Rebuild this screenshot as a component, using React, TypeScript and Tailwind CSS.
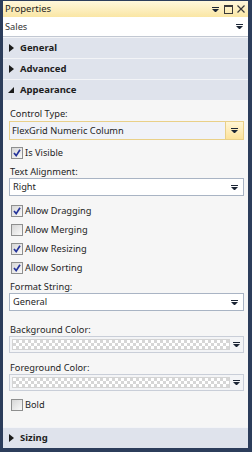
import React from "react";

const font = { fontFamily: '"Segoe UI", "Noto Sans", "Open Sans", sans-serif' };

function Arrow({ className = "" }: { className?: string }) {
  return (
    <svg width="7" height="5" viewBox="0 0 7 5" className={className}>
      <rect x="0" y="0" width="7" height="1" fill="#1b2535" />
      <polygon points="0,2 7,2 3.5,5.5" fill="#1b2535" />
    </svg>
  );
}

function Check({ checked }: { checked: boolean }) {
  return (
    <div className="w-[12px] h-[12px] shrink-0 border border-[#8e8f8f] bg-gradient-to-br from-[#d6d6d6] to-[#fafafa] flex items-center justify-center">
      {checked && (
        <svg width="8" height="8" viewBox="0 0 8 8">
          <path d="M1 4 L3.2 6.6 L7 0.8" stroke="#24339a" strokeWidth="1.7" fill="none" />
        </svg>
      )}
    </div>
  );
}

function Header({ label, open = false }: { label: string; open?: boolean }) {
  return (
    <div className="h-[21px] shrink-0 bg-[#dfe3ec] flex items-center pl-[5px] border-t border-[#f3f4f7]">
      <div className="w-[12px] flex items-center">
        {open ? (
          <svg width="6" height="6" viewBox="0 0 6 6">
            <polygon points="6,0 6,6 0,6" fill="#1b1b1b" />
          </svg>
        ) : (
          <svg width="5" height="8" viewBox="0 0 5 8" className="ml-[1px]">
            <polygon points="0,0 5,4 0,8" fill="#1b1b1b" />
          </svg>
        )}
      </div>
      <span className="text-[9.5px] leading-[12px] font-bold text-[#1e1e1e]">{label}</span>
    </div>
  );
}

function Label({ text, className = "" }: { text: string; className?: string }) {
  return (
    <div className={"h-[13px] shrink-0 pl-[1px] text-[9.25px] leading-[13px] text-[#1e1e1e] " + className}>{text}</div>
  );
}

function Combo({ text }: { text: string }) {
  return (
    <div className="h-[18px] shrink-0 bg-white border border-[#a9b4c4] flex items-center pl-[3px] pr-[5px]">
      <span className="flex-1 text-[9.25px] leading-[12px] text-[#1e1e1e]">{text}</span>
      <Arrow />
    </div>
  );
}

function ColorCombo() {
  return (
    <div className="h-[17px] shrink-0 bg-[#f3f4f6] border border-[#c9ced8] flex items-center py-[2px] pl-[2px]">
      <div
        className="flex-1 h-[11px] border border-[#d4d4d4]"
        style={{
          backgroundColor: "#ffffff",
          backgroundImage:
            "linear-gradient(45deg, #d6d6d6 25%, transparent 25%, transparent 75%, #d6d6d6 75%), linear-gradient(45deg, #d6d6d6 25%, transparent 25%, transparent 75%, #d6d6d6 75%)",
          backgroundSize: "6px 6px",
          backgroundPosition: "0 0, 3px 3px",
        }}
      />
      <div className="w-[13px] flex items-center justify-center">
        <Arrow />
      </div>
    </div>
  );
}

function CheckRow({ label, checked, className = "" }: { label: string; checked: boolean; className?: string }) {
  return (
    <div className={"flex items-center h-[19px] shrink-0 pl-[2px] " + className}>
      <Check checked={checked} />
      <span className="ml-[2px] text-[9.25px] leading-[12px] text-[#1e1e1e]">{label}</span>
    </div>
  );
}

export default function App() {
  return (
    <div className="w-[252px] h-[452px] bg-[#2c3d5b] pt-[1px] pl-[3px] pr-[4px] pb-[4px]" style={font}>
      <div className="w-full h-full flex flex-col bg-[#f6f6f6] overflow-hidden">
        <div className="h-[16px] shrink-0 bg-gradient-to-b from-[#fff8dc] to-[#fae6a4] flex items-center pl-[2px] pr-[3px]">
          <span className="flex-1 text-[9.5px] leading-[12px] text-[#1e1e1e]">Properties</span>
          <Arrow className="mr-[5px]" />
          <svg width="9" height="9" viewBox="0 0 9 9" className="mr-[4px]">
            <rect x="0.5" y="0.5" width="8" height="8" fill="none" stroke="#3a3a3a" />
            <rect x="0" y="0" width="9" height="2" fill="#3a3a3a" />
          </svg>
          <svg width="8" height="8" viewBox="0 0 8 8">
            <path d="M0.5 0.5 L7.5 7.5 M7.5 0.5 L0.5 7.5" stroke="#3a3a3a" strokeWidth="1.2" />
          </svg>
        </div>
        <div className="h-[20px] shrink-0 bg-white border-b border-[#c2c8d2] flex items-center pl-[2px] pr-[5px]">
          <span className="flex-1 text-[9.25px] leading-[12px] text-[#333]">Sales</span>
          <Arrow />
        </div>
        <Header label="General" />
        <Header label="Advanced" />
        <Header label="Appearance" open />
        <div className="flex-1 flex flex-col pl-[6px] pr-[4px] pt-[7px]">
          <Label text="Control Type:" />
          <div className="h-[19px] shrink-0 mt-[1px] border border-[#e9d089] bg-[#f0f2f8] flex">
            <span className="flex-1 text-[9.25px] leading-[12px] text-[#1e1e1e] pl-[2px] flex items-center">FlexGrid Numeric Column</span>
            <div className="w-[18px] border-l border-[#e9d089] bg-gradient-to-b from-[#fff6d6] to-[#fde29a] flex items-center justify-center">
              <Arrow />
            </div>
          </div>
          <CheckRow label="Is Visible" checked className="mt-[3px]" />
          <Label text="Text Alignment:" className="mt-[3px]" />
          <Combo text="Right" />
          <CheckRow label="Allow Dragging" checked className="mt-[5px]" />
          <CheckRow label="Allow Merging" checked={false} />
          <CheckRow label="Allow Resizing" checked />
          <CheckRow label="Allow Sorting" checked />
          <Label text="Format String:" className="mt-[3px]" />
          <Combo text="General" />
          <Label text="Background Color:" className="mt-[12px]" />
          <ColorCombo />
          <Label text="Foreground Color:" className="mt-[8px]" />
          <ColorCombo />
          <CheckRow label="Bold" checked={false} className="mt-[4px]" />
        </div>
        <Header label="Sizing" />
      </div>
    </div>
  );
}
